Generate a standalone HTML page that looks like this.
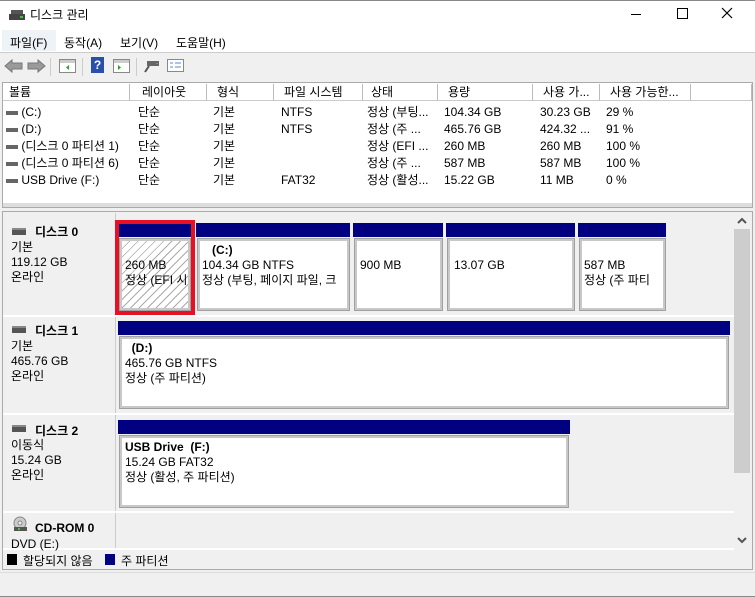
<!DOCTYPE html>
<html><head><meta charset="utf-8"><style>
*{margin:0;padding:0;box-sizing:border-box}
body{width:755px;height:597px;background:#f0f0f0;font-family:"Liberation Sans","Noto Sans CJK KR",sans-serif;font-size:12px;color:#000;position:relative;overflow:hidden}
.a{position:absolute;white-space:nowrap}
.b{font-weight:bold}
.nav{background:#000080;position:absolute}
.box{position:absolute;background:#fff;border:2px solid #c8c8c8;outline:1px solid #a0a0a0}
.hdr{position:absolute;top:84px;height:17px;border-right:1px solid #bbb;border-bottom:1px solid #ccc;padding-left:6px;line-height:16px;background:#fff}
.di{position:absolute;width:14px;height:7px;background:#555;border-top:2px solid #888}
</style></head><body>
<div class="a" style="left:0;top:0;width:755px;height:30px;background:#fff;border-top:1px solid #888"></div>
<svg class="a" style="left:9px;top:9px" width="16" height="12"><rect x="2" y="1" width="12" height="4" fill="#555"/><rect x="0" y="5" width="16" height="6" fill="#444"/><rect x="11" y="7" width="3" height="2" fill="#3c3"/></svg>
<div class="a" style="left:30px;top:6px;font-size:12px">디스크 관리</div>
<div class="a" style="left:631px;top:14px;width:10px;height:1px;background:#000"></div>
<div class="a" style="left:677px;top:8px;width:11px;height:11px;border:1px solid #000"></div>
<svg class="a" style="left:721px;top:7px" width="12" height="12"><path d="M1 1L11 11M11 1L1 11" stroke="#000" stroke-width="1.2"/></svg>
<div class="a" style="left:0;top:30px;width:755px;height:23px;background:#fff;border-bottom:1px solid #ccc"></div>
<div class="a" style="left:2px;top:30px;width:54px;height:21px;background:#eef3f8"></div>
<div class="a" style="left:10px;top:34px">파일(F)</div>
<div class="a" style="left:64px;top:34px">동작(A)</div>
<div class="a" style="left:120px;top:34px">보기(V)</div>
<div class="a" style="left:176px;top:34px">도움말(H)</div>
<div class="a" style="left:0;top:54px;width:755px;height:24px;background:#f0f0f0"></div>
<svg class="a" style="left:4px;top:58px" width="42" height="16"><path d="M1 8L8 2V5H18V11H8V14Z" fill="#9a9a9a" stroke="#777"/><path d="M41 8L34 2V5H24V11H34V14Z" fill="#9a9a9a" stroke="#777"/></svg>
<div class="a" style="left:50px;top:58px;width:1px;height:18px;background:#ccc"></div>
<svg class="a" style="left:59px;top:59px" width="17" height="14"><rect x=".5" y=".5" width="16" height="13" fill="#fff" stroke="#888"/><rect x="1" y="1" width="15" height="3" fill="#ccc"/><path d="M10 6L7 8.5L10 11Z" fill="#2a2"/></svg>
<div class="a" style="left:82px;top:58px;width:1px;height:18px;background:#ccc"></div>
<div class="a b" style="left:91px;top:57px;width:13px;height:16px;background:#2a4fa8;color:#fff;text-align:center;line-height:16px">?</div>
<svg class="a" style="left:113px;top:59px" width="17" height="14"><rect x=".5" y=".5" width="16" height="13" fill="#fff" stroke="#888"/><rect x="1" y="1" width="15" height="3" fill="#ccc"/><path d="M5 6L8 8.5L5 11Z" fill="#2a2"/></svg>
<div class="a" style="left:136px;top:58px;width:1px;height:18px;background:#ccc"></div>
<svg class="a" style="left:144px;top:60px" width="16" height="14"><rect x="3" y="1" width="12" height="5" fill="#666"/><rect x="12" y="3" width="2" height="1" fill="#3c3"/><path d="M5 6L1 12" stroke="#555" stroke-width="2"/></svg>
<svg class="a" style="left:167px;top:59px" width="17" height="13"><rect x=".5" y=".5" width="16" height="12" fill="#fff" stroke="#888"/><path d="M3 4h3M3 8h3M8 4h6M8 8h6" stroke="#5a8ad0"/></svg>
<div class="a" style="left:2px;top:82px;width:751px;height:126px;background:#fff;border:1px solid #aaa"></div>
<div class="hdr" style="left:3px;width:127px">볼륨</div>
<div class="hdr" style="left:130px;width:77px;padding-left:12px">레이아웃</div>
<div class="hdr" style="left:207px;width:67px;padding-left:10px">형식</div>
<div class="hdr" style="left:274px;width:89px;padding-left:10px">파일 시스템</div>
<div class="hdr" style="left:363px;width:75px;padding-left:8px">상태</div>
<div class="hdr" style="left:438px;width:95px;padding-left:10px">용량</div>
<div class="hdr" style="left:533px;width:67px;padding-left:10px">사용 가...</div>
<div class="hdr" style="left:600px;width:91px;padding-left:10px">사용 가능한...</div>
<div class="hdr" style="left:691px;width:61px"></div>
<div class="a" style="left:0;top:104px;line-height:17px">
<div class="a" style="left:6px;top:0"><span style="display:inline-block;width:12px;height:4px;background:#666;vertical-align:middle"></span> (C:)</div>
<div class="a" style="left:6px;top:17px"><span style="display:inline-block;width:12px;height:4px;background:#666;vertical-align:middle"></span> (D:)</div>
<div class="a" style="left:6px;top:34px"><span style="display:inline-block;width:12px;height:4px;background:#666;vertical-align:middle"></span> (디스크 0 파티션 1)</div>
<div class="a" style="left:6px;top:51px"><span style="display:inline-block;width:12px;height:4px;background:#666;vertical-align:middle"></span> (디스크 0 파티션 6)</div>
<div class="a" style="left:6px;top:68px"><span style="display:inline-block;width:12px;height:4px;background:#666;vertical-align:middle"></span> USB Drive (F:)</div>
<div class="a" style="left:138px;top:0">단순<br>단순<br>단순<br>단순<br>단순</div>
<div class="a" style="left:213px;top:0">기본<br>기본<br>기본<br>기본<br>기본</div>
<div class="a" style="left:281px;top:0">NTFS<br>NTFS<br><br><br>FAT32</div>
<div class="a" style="left:367px;top:0">정상 (부팅...<br>정상 (주 ...<br>정상 (EFI ...<br>정상 (주 ...<br>정상 (활성...</div>
<div class="a" style="left:444px;top:0">104.34 GB<br>465.76 GB<br>260 MB<br>587 MB<br>15.22 GB</div>
<div class="a" style="left:540px;top:0">30.23 GB<br>424.32 ...<br>260 MB<br>587 MB<br>11 MB</div>
<div class="a" style="left:606px;top:0">29 %<br>91 %<br>100 %<br>100 %<br>0 %</div>
</div>
<div class="a" style="left:3px;top:203px;width:749px;height:4px;background:#ddd"></div>
<div class="a" style="left:2px;top:211px;width:751px;height:359px;border:1px solid #aaa;background:#f0f0f0"></div>
<div class="a" style="left:734px;top:213px;width:17px;height:336px;background:#f0f0f0"></div>
<div class="a" style="left:734px;top:229px;width:16px;height:244px;background:#cdcdcd"></div>
<svg class="a" style="left:737px;top:217px" width="10" height="7"><path d="M1 6L5 2L9 6" stroke="#555" stroke-width="2" fill="none"/></svg>
<svg class="a" style="left:737px;top:537px" width="10" height="7"><path d="M1 1L5 5L9 1" stroke="#555" stroke-width="2" fill="none"/></svg>
<div class="a" style="left:115px;top:213px;width:1px;height:336px;background:#ccc"></div>
<div class="a" style="left:3px;top:315px;width:731px;height:2px;background:#fff"></div>
<div class="a" style="left:3px;top:413px;width:731px;height:2px;background:#fff"></div>
<div class="a" style="left:3px;top:511px;width:731px;height:2px;background:#fff"></div>
<div class="a" style="left:3px;top:548px;width:731px;height:2px;background:#fff"></div>
<!-- disk 0 -->
<div class="di" style="left:12px;top:228px"></div>
<div class="a b" style="left:35px;top:223px">디스크 0</div>
<div class="a" style="left:11px;top:240px;line-height:15px">기본<br>119.12 GB<br>온라인</div>
<div class="nav" style="left:117px;top:223px;width:76px;height:14px"></div>
<div class="nav" style="left:196px;top:223px;width:154px;height:14px"></div>
<div class="nav" style="left:353px;top:223px;width:90px;height:14px"></div>
<div class="nav" style="left:446px;top:223px;width:129px;height:14px"></div>
<div class="nav" style="left:578px;top:223px;width:88px;height:14px"></div>
<div class="box" style="left:120px;top:239px;width:70px;height:71px;background:repeating-linear-gradient(135deg,#fff 0 5px,#aaa 5px 6px)"></div>
<div class="a" style="left:125px;top:258px;line-height:15px">260 MB<br>정상 (EFI 시</div>
<div class="a" style="left:115px;top:220px;width:80px;height:95px;border:4px solid #e81123"></div>
<div class="box" style="left:198px;top:239px;width:151px;height:71px"></div>
<div class="a" style="left:202px;top:243px;line-height:15px"><b>&nbsp;&nbsp;&nbsp;(C:)</b><br>104.34 GB NTFS<br>정상 (부팅, 페이지 파일, 크</div>
<div class="box" style="left:355px;top:239px;width:87px;height:71px"></div>
<div class="a" style="left:360px;top:258px">900 MB</div>
<div class="box" style="left:448px;top:239px;width:126px;height:71px"></div>
<div class="a" style="left:454px;top:258px">13.07 GB</div>
<div class="box" style="left:580px;top:239px;width:85px;height:71px"></div>
<div class="a" style="left:584px;top:258px;line-height:15px">587 MB<br>정상 (주 파티</div>
<!-- disk 1 -->
<div class="di" style="left:12px;top:326px"></div>
<div class="a b" style="left:35px;top:322px">디스크 1</div>
<div class="a" style="left:11px;top:339px;line-height:15px">기본<br>465.76 GB<br>온라인</div>
<div class="nav" style="left:118px;top:321px;width:612px;height:14px"></div>
<div class="box" style="left:120px;top:337px;width:608px;height:71px"></div>
<div class="a" style="left:125px;top:341px;line-height:15px"><b>&nbsp;&nbsp;(D:)</b><br>465.76 GB NTFS<br>정상 (주 파티션)</div>
<!-- disk 2 -->
<div class="di" style="left:12px;top:425px"></div>
<div class="a b" style="left:35px;top:422px">디스크 2</div>
<div class="a" style="left:11px;top:438px;line-height:15px">이동식<br>15.24 GB<br>온라인</div>
<div class="nav" style="left:118px;top:420px;width:452px;height:14px"></div>
<div class="box" style="left:120px;top:436px;width:448px;height:71px"></div>
<div class="a" style="left:125px;top:440px;line-height:15px"><b>USB Drive&nbsp; (F:)</b><br>15.24 GB FAT32<br>정상 (활성, 주 파티션)</div>
<!-- cdrom -->
<svg class="a" style="left:12px;top:516px" width="16" height="16"><circle cx="8" cy="7" r="6" fill="#ccc" stroke="#888"/><circle cx="8" cy="7" r="2" fill="#eee" stroke="#888"/><rect x="2" y="11" width="13" height="4" fill="#555"/><rect x="6" y="12" width="2" height="2" fill="#3c3"/></svg>
<div class="a b" style="left:35px;top:521px">CD-ROM 0</div>
<div class="a" style="left:11px;top:537px">DVD (E:)</div>
<!-- legend -->
<div class="a" style="left:7px;top:554px;width:10px;height:11px;background:#000"></div>
<div class="a" style="left:23px;top:552px">할당되지 않음</div>
<div class="a" style="left:105px;top:554px;width:10px;height:11px;background:#000080"></div>
<div class="a" style="left:121px;top:552px">주 파티션</div>
<div class="a" style="left:0;top:572px;width:755px;height:25px;background:#f0f0f0;border-top:1px solid #ddd"></div>
<div class="a" style="left:0;top:596px;width:755px;height:1px;background:#888"></div>
</body></html>
